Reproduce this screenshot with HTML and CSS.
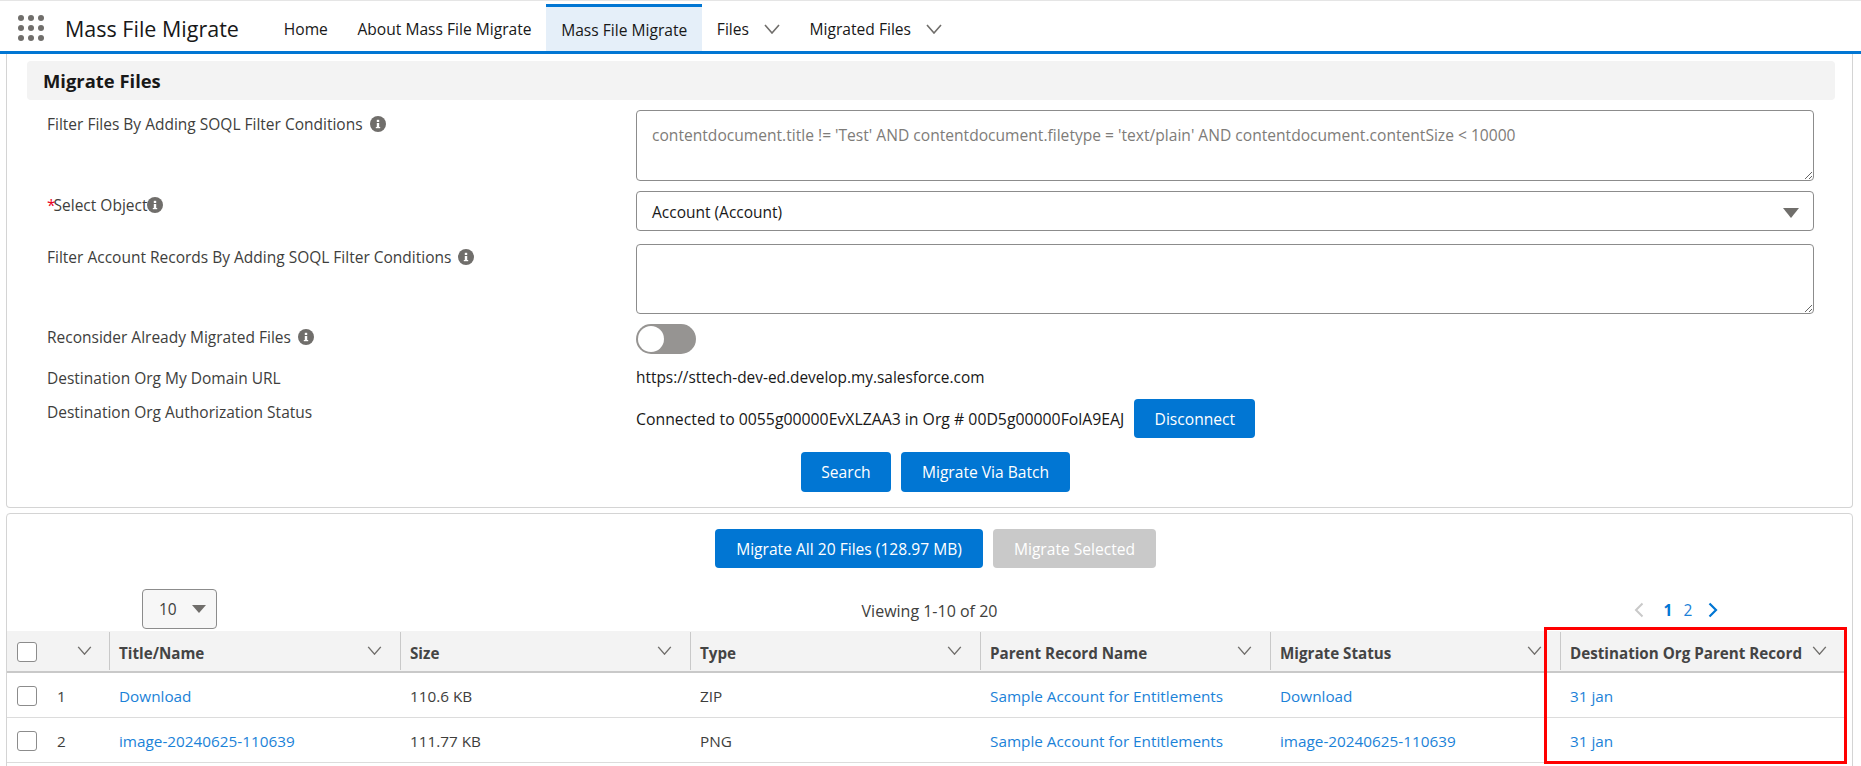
FILE: index.html
```html
<!DOCTYPE html>
<html lang="en">
<head>
<meta charset="utf-8">
<title>Mass File Migrate</title>
<link rel="stylesheet" href="styles.css">
</head>
<body>
<svg class="defs" width="0" height="0" aria-hidden="true">
  <symbol id="chev" viewBox="0 0 16 10"><polyline points="1,1 8,9 15,1" fill="none" stroke="#706e6b" stroke-width="1.6"/></symbol>
  <symbol id="info" viewBox="0 0 16 16"><circle cx="8" cy="8" r="8" fill="#706e6b"/><rect x="6.8" y="7" width="2.4" height="5" fill="#fff"/><rect x="6.8" y="3.8" width="2.4" height="2.2" fill="#fff"/><rect x="5.8" y="11" width="4.4" height="1.2" fill="#fff"/></symbol>
</svg>
<header class="nav">
  <div class="launcher"><i></i><i></i><i></i><i></i><i></i><i></i><i></i><i></i><i></i></div>
  <div class="app-name">Mass File Migrate</div>
  <nav class="tabs">
    <a class="tab">Home</a>
    <a class="tab">About Mass File Migrate</a>
    <a class="tab active">Mass File Migrate</a>
    <a class="tab">Files<svg class="nav-chev"><use href="#chev"/></svg></a>
    <a class="tab">Migrated Files<svg class="nav-chev"><use href="#chev"/></svg></a>
  </nav>
</header>

<section class="card card-form">
  <h1 class="card-title">Migrate Files</h1>
  <div class="row row-ta1">
    <div class="label">Filter Files By Adding SOQL Filter Conditions<svg class="info"><use href="#info"/></svg></div>
    <textarea class="field ta ta1" placeholder="contentdocument.title != 'Test' AND contentdocument.filetype = 'text/plain' AND contentdocument.contentSize < 10000"></textarea>
  </div>
  <div class="row row-select">
    <div class="label"><span class="req">*</span>Select Object<svg class="info tight"><use href="#info"/></svg></div>
    <div class="field select"><span class="select-text">Account (Account)</span><span class="tri"></span></div>
  </div>
  <div class="row row-ta2">
    <div class="label label-up">Filter Account Records By Adding SOQL Filter Conditions<svg class="info"><use href="#info"/></svg></div>
    <textarea class="field ta ta2"></textarea>
  </div>
  <div class="row row-toggle">
    <div class="label label-up">Reconsider Already Migrated Files<svg class="info"><use href="#info"/></svg></div>
    <div class="toggle"><span class="knob"></span></div>
  </div>
  <div class="row row-url">
    <div class="label flat">Destination Org My Domain URL</div>
    <div class="value">https://sttech-dev-ed.develop.my.salesforce.com</div>
  </div>
  <div class="row row-auth">
    <div class="label label-up">Destination Org Authorization Status</div>
    <div class="value auth">Connected to 0055g00000EvXLZAA3 in Org # 00D5g00000FolA9EAJ<button class="btn btn-disconnect">Disconnect</button></div>
  </div>
  <div class="actions actions-form">
    <button class="btn btn-search">Search</button>
    <button class="btn btn-batch">Migrate Via Batch</button>
  </div>
</section>

<section class="card card-table">
  <div class="actions">
    <button class="btn btn-all">Migrate All 20 Files (128.97 MB)</button>
    <button class="btn btn-sel" disabled>Migrate Selected</button>
  </div>
  <div class="pager">
    <div class="pager-left"><div class="size-select">10<span class="tri small"></span></div></div>
    <div class="viewing">Viewing 1-10 of 20</div>
    <div class="pager-right">
      <svg class="pg-arrow" viewBox="0 0 10 16"><polyline points="8.5,1.5 2,8 8.5,14.5" fill="none" stroke="#c9c9c9" stroke-width="2"/></svg>
      <a class="pg cur">1</a><a class="pg">2</a>
      <svg class="pg-arrow" viewBox="0 0 10 16"><polyline points="1.5,1.5 8,8 1.5,14.5" fill="none" stroke="#0176d3" stroke-width="2.2"/></svg>
    </div>
  </div>
  <table class="grid">
    <colgroup><col class="c0"><col class="c1"><col class="c2"><col class="c3"><col class="c4"><col class="c5"><col class="c6"></colgroup>
    <thead>
      <tr>
        <th class="sel"><span class="sel-inner"><span class="check"></span><svg class="th-chev"><use href="#chev"/></svg></span></th>
        <th><span class="th-inner">Title/Name<svg class="th-chev"><use href="#chev"/></svg></span></th>
        <th><span class="th-inner">Size<svg class="th-chev"><use href="#chev"/></svg></span></th>
        <th><span class="th-inner">Type<svg class="th-chev"><use href="#chev"/></svg></span></th>
        <th><span class="th-inner">Parent Record Name<svg class="th-chev"><use href="#chev"/></svg></span></th>
        <th><span class="th-inner">Migrate Status<svg class="th-chev"><use href="#chev"/></svg></span></th>
        <th><span class="th-inner">Destination Org Parent Record<svg class="th-chev"><use href="#chev"/></svg></span></th>
      </tr>
    </thead>
    <tbody>
      <tr>
        <td class="sel"><span class="sel-inner"><span class="check"></span><span class="num">1</span></span></td>
        <td><a>Download</a></td><td>110.6 KB</td><td>ZIP</td>
        <td><a>Sample Account for Entitlements</a></td><td><a>Download</a></td><td><a>31 jan</a></td>
      </tr>
      <tr>
        <td class="sel"><span class="sel-inner"><span class="check"></span><span class="num">2</span></span></td>
        <td><a>image-20240625-110639</a></td><td>111.77 KB</td><td>PNG</td>
        <td><a>Sample Account for Entitlements</a></td><td><a>image-20240625-110639</a></td><td><a>31 jan</a></td>
      </tr>
    </tbody>
  </table>
  <div class="highlight"></div>
</section>
</body>
</html>
```
FILE: styles.css
```css
* { box-sizing: border-box; }
html, body { height: 100%; }
body {
  margin: 0;
  height: 766px;
  overflow: hidden;
  background: #fff;
  color: #3e3e3c;
  font-family: "Open Sans", "Noto Sans", sans-serif;
  font-size: 15.5px;
  line-height: 20px;
}
.defs { position: absolute; }

/* nav */
.nav {
  display: flex;
  align-items: stretch;
  height: 54px;
  border-top: 1px solid #e5e5e5;
  border-bottom: 3px solid #0176d3;
  padding-left: 18px;
}
.launcher {
  display: grid;
  grid-template-columns: repeat(3, 6px);
  grid-auto-rows: 6px;
  gap: 4px;
  align-self: flex-start;
  margin-top: 14px;
}
.launcher i { background: #706e6b; border-radius: 50%; }
.app-name {
  margin-left: 21px;
  width: 187px;
  font-size: 21.5px;
  line-height: 56px;
  color: #181818;
  white-space: nowrap;
}
.tabs { display: flex; margin-left: 17px; }
.tab {
  display: flex;
  align-items: center;
  padding: 5px 14.8px 0;
  font-size: 15.6px;
  color: #181818;
  white-space: nowrap;
}
.tab.active {
  background: #e5eff9;
  border-top: 3px solid #0176d3;
  margin-top: 3px;
  padding-top: 2px;
}
.nav-chev { width: 16px; height: 10px; margin-left: 15px; }

/* cards */
.card {
  margin: 0 8px 0 6px;
  border: 1px solid #d4d4d4;
  border-radius: 4px;
  background: #fff;
}
.card-form {
  height: 454px;
  padding-top: 7px;
  border-top: 0;
  border-radius: 0 0 4px 4px;
}
.card-title {
  margin: 0 17px 10px 20px;
  height: 39px;
  padding-left: 16px;
  background: #f3f3f3;
  border-radius: 4px;
  font-size: 18.4px;
  line-height: 40px;
  font-weight: 700;
  color: #181818;
}

/* form rows */
.row { display: flex; align-items: flex-start; padding: 0 38px 0 40px; }
.row-select { margin-top: 10px; }
.row-ta2 { margin-top: 13px; }
.row-toggle { margin-top: 10px; }
.row-url { margin-top: 14px; }
.row-auth { margin-top: 11px; }
.label { flex: 0 0 589px; padding-top: 4px; color: #3e3e3c; white-space: nowrap; display: flex; align-items: center; }
.label-up { padding-top: 3px; }
.label.flat { padding-top: 0; }
.req { color: #ea001e; margin-right: -2px; }
.info { width: 16px; height: 16px; margin-left: 7px; flex: none; }
.info.tight { margin-left: 0; }
.field {
  flex: 1;
  display: block;
  background: #fff;
  border: 1px solid #8c8c8c;
  border-radius: 4px;
  font: inherit;
  color: #181818;
}
.ta { padding: 14px 15px; outline: 0; margin: 0; resize: vertical; font-size: 15.6px; }
.ta::placeholder { color: #7e7c79; opacity: 1; }
.ta1 { height: 71px; }
.ta2 { height: 70px; }
.select {
  height: 40px;
  display: flex;
  align-items: center;
  justify-content: space-between;
  padding: 0 15px;
}
.select-text { padding-top: 2px; }
.tri {
  width: 0;
  height: 0;
  border-left: 8px solid transparent;
  border-right: 8px solid transparent;
  border-top: 10px solid #706e6b;
  margin-right: -1px;
  margin-top: 4px;
}
.tri.small { margin: 0; border-left-width: 7px; border-right-width: 7px; border-top-width: 8px; }
.toggle {
  width: 60px;
  height: 30px;
  border-radius: 15px;
  background: #969492;
  padding: 2px;
}
.knob { display: block; width: 26px; height: 26px; border-radius: 50%; background: #fff; }
.value { color: #181818; white-space: nowrap; font-size: 15.4px; }
.auth { display: flex; align-items: center; font-size: 15.8px; }

/* buttons */
.btn {
  height: 39px;
  border: 0;
  border-radius: 4px;
  background: #0176d3;
  color: #fff;
  font: inherit;
  font-size: 15.6px;
  padding: 0;
  white-space: nowrap;
}
.btn-disconnect { width: 121px; margin-left: 10px; }
.btn-search { width: 90px; height: 40px; }
.btn-batch { width: 169px; height: 40px; }
.btn-all { width: 268px; }
.btn-sel { width: 163px; background: #c9c9c9; }
.actions { display: flex; justify-content: center; gap: 10px; padding-left: 12px; }
.actions-form { margin-top: 14px; }

/* table card */
.card-table { position: relative; margin-top: 5px; padding-top: 15px; height: 300px; }
.pager {
  display: grid;
  grid-template-columns: 1fr auto 1fr;
  align-items: center;
  margin-top: 21px;
  height: 40px;
  margin-bottom: 2px;
}
.pager-left { padding-left: 135px; }
.size-select {
  width: 75px;
  height: 40px;
  display: flex;
  align-items: center;
  justify-content: space-between;
  padding: 0 10px 0 16px;
  background: #f7f7f7;
  border: 1px solid #8c8c8c;
  border-radius: 4px;
  color: #3e3e3c;
}
.viewing { color: #3e3e3c; padding-top: 4px; font-size: 16px; }
.pager-right {
  display: flex;
  align-items: center;
  justify-content: flex-end;
  padding-right: 134px;
  padding-top: 2px;
}
.pg-arrow { width: 10px; height: 16px; }
.pg { color: #1b82d8; width: 20px; text-align: center; }
.pg.cur { color: #0176d3; font-weight: 700; margin-left: 14px; }
.pg + .pg-arrow { margin-left: 10px; }

.grid {
  table-layout: fixed;
  border-collapse: collapse;
  width: 1838px;
  color: #3e3e3c;
  font-size: 15.3px;
}
.c0 { width: 102px; }
.c1 { width: 291px; }
.c2, .c3, .c4, .c5 { width: 290px; }
.c6 { width: 285px; }
.grid th {
  height: 41px;
  padding: 0;
  background: #f3f3f3;
  border-bottom: 2px solid #c9c9c9;
  font-size: 15.2px;
  font-weight: 700;
  text-align: left;
  color: #444;
}
.th-inner {
  display: flex;
  align-items: center;
  justify-content: space-between;
  height: 38px;
  margin-bottom: 1px;
  padding: 4px 18px 0 9px;
  border-left: 1px solid #c9c9c9;
  white-space: nowrap;
}
th .th-chev { width: 15px; height: 9px; flex: none; margin-top: -4px; }
.grid td {
  height: 45px;
  padding: 2px 0 0 10px;
  border-bottom: 1px solid #dcdcdc;
  white-space: nowrap;
}
.grid td.sel { padding: 2px 0 0 10px; }
.grid th.sel { padding: 2px 0 0 10px; }
.sel-inner { display: flex; align-items: center; }
.check {
  width: 20px;
  height: 20px;
  flex: none;
  background: #fff;
  border: 1px solid #8c8c8c;
  border-radius: 3px;
}
.sel-inner .th-chev { margin-left: 40px; }
.num { margin-left: 20px; }
.grid a { color: #1b82d8; }
.highlight {
  position: absolute;
  left: 1537px;
  top: 113px;
  width: 303px;
  height: 137px;
  border: 3px solid #f00;
}
```
